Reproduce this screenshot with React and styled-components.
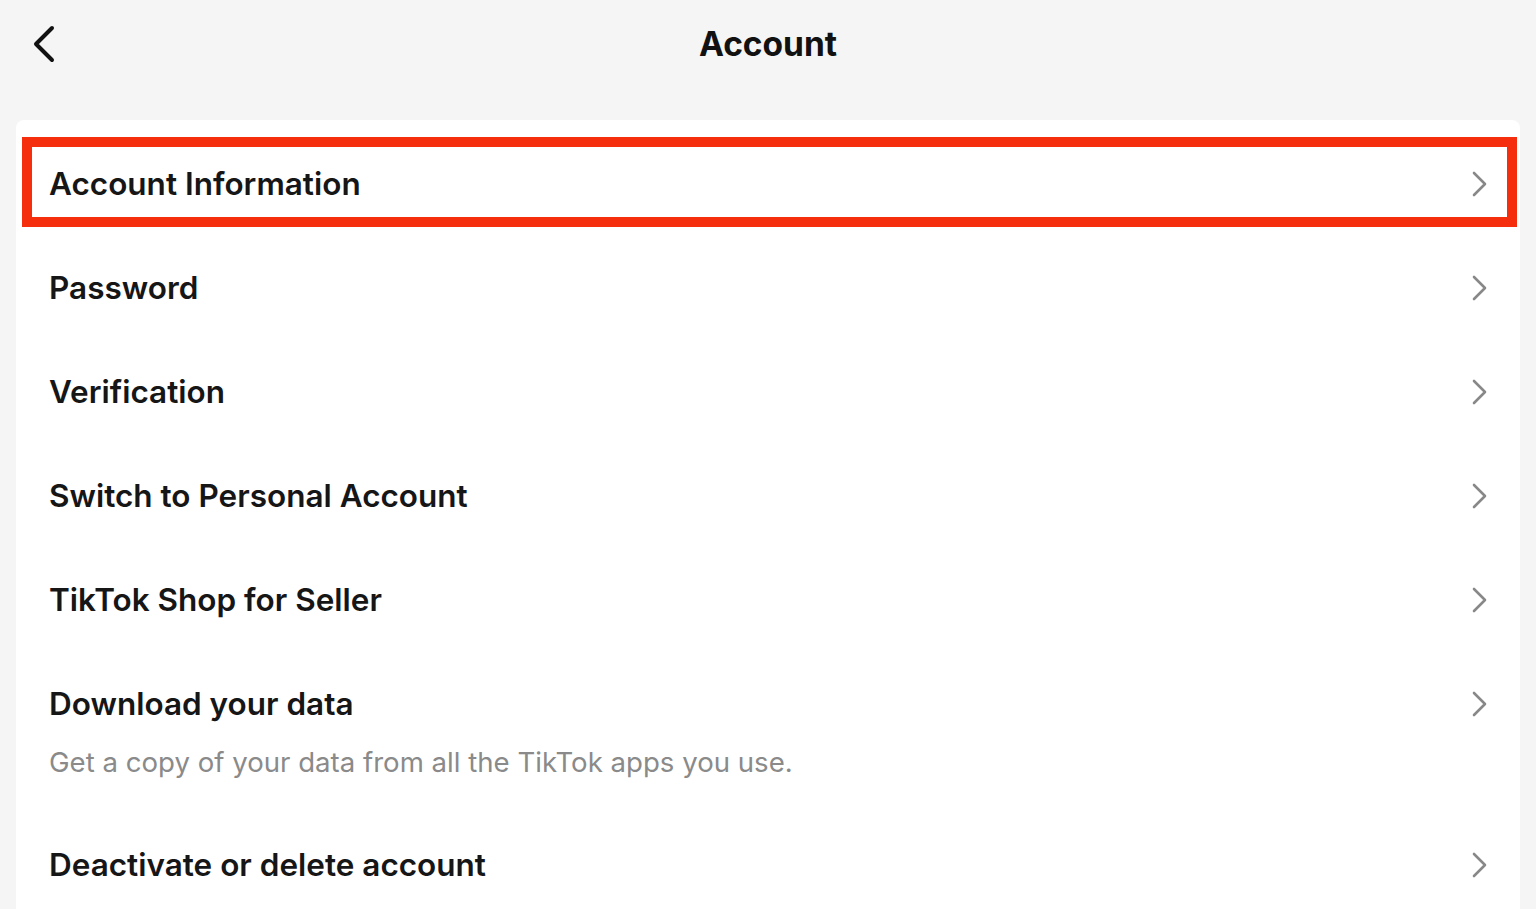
import React from 'react';
import styled, { createGlobalStyle } from 'styled-components';

const Global = createGlobalStyle`
  html, body {
    margin: 0;
    padding: 0;
    background: #f5f5f5;
    font-family: Inter, "Noto Sans", "Liberation Sans", sans-serif;
    color: #111;
  }
`;

const Page = styled.div`
  width: 1536px;
  height: 909px;
  overflow: hidden;
  display: flex;
  flex-direction: column;
`;

const Header = styled.header`
  flex: none;
  height: 88px;
  display: grid;
  grid-template-columns: 88px 1fr 88px;
  align-items: center;
`;

const Back = styled.button`
  border: 0;
  background: none;
  padding: 0 0 0 30px;
  height: 44px;
  display: flex;
  align-items: center;
  cursor: pointer;
`;

const Title = styled.h1`
  margin: 0;
  text-align: center;
  font-size: 33.5px;
  font-weight: 700;
  color: #111;
`;

const Card = styled.ul`
  flex: none;
  list-style: none;
  margin: 32px 16px 0 16px;
  padding: 12px 0 0 0;
  background: #fff;
  border-radius: 8px 8px 0 0;
`;

const Row = styled.li`
  position: relative;
  display: flex;
  align-items: flex-start;
  padding: 36px 33px 36px 33px;
  cursor: pointer;

  &::after {
    content: '';
    display: ${p => (p.$highlight ? 'block' : 'none')};
    position: absolute;
    left: 6px;
    right: 3px;
    top: 5px;
    bottom: 9px;
    border: 10px solid #f52e0e;
    pointer-events: none;
  }
`;

const Texts = styled.div`
  flex: 1;
  display: flex;
  flex-direction: column;
  gap: 27px;
`;

const Label = styled.span`
  font-size: 31.5px;
  line-height: 32px;
  font-weight: 600;
  color: #161616;
`;

const Sub = styled.span`
  font-size: 27.6px;
  line-height: 30px;
  font-weight: 400;
  color: #8a8a8a;
`;

const Chevron = styled.svg`
  width: 20px;
  height: 32px;
  flex: none;
`;

const items = [
  { label: 'Account Information', highlight: true },
  { label: 'Password' },
  { label: 'Verification' },
  { label: 'Switch to Personal Account' },
  { label: 'TikTok Shop for Seller' },
  { label: 'Download your data', sub: 'Get a copy of your data from all the TikTok apps you use.' },
  { label: 'Deactivate or delete account' },
];

export default function App() {
  return (
    <Page>
      <Global />
      <Header>
        <Back aria-label="Back">
          <svg width="28" height="40" viewBox="0 0 28 40">
            <path d="M22 4 L6 20 L22 36" fill="none" stroke="#111" strokeWidth="4" strokeLinecap="round" strokeLinejoin="round" />
          </svg>
        </Back>
        <Title>Account</Title>
        <div />
      </Header>
      <Card>
        {items.map(it => (
          <Row key={it.label} $highlight={it.highlight}>
            <Texts>
              <Label>{it.label}</Label>
              {it.sub && <Sub>{it.sub}</Sub>}
            </Texts>
            <Chevron viewBox="0 0 20 32">
              <path d="M7 5 L18 16 L7 27" fill="none" stroke="#888" strokeWidth="2.6" strokeLinecap="round" strokeLinejoin="round" />
            </Chevron>
          </Row>
        ))}
      </Card>
    </Page>
  );
}
